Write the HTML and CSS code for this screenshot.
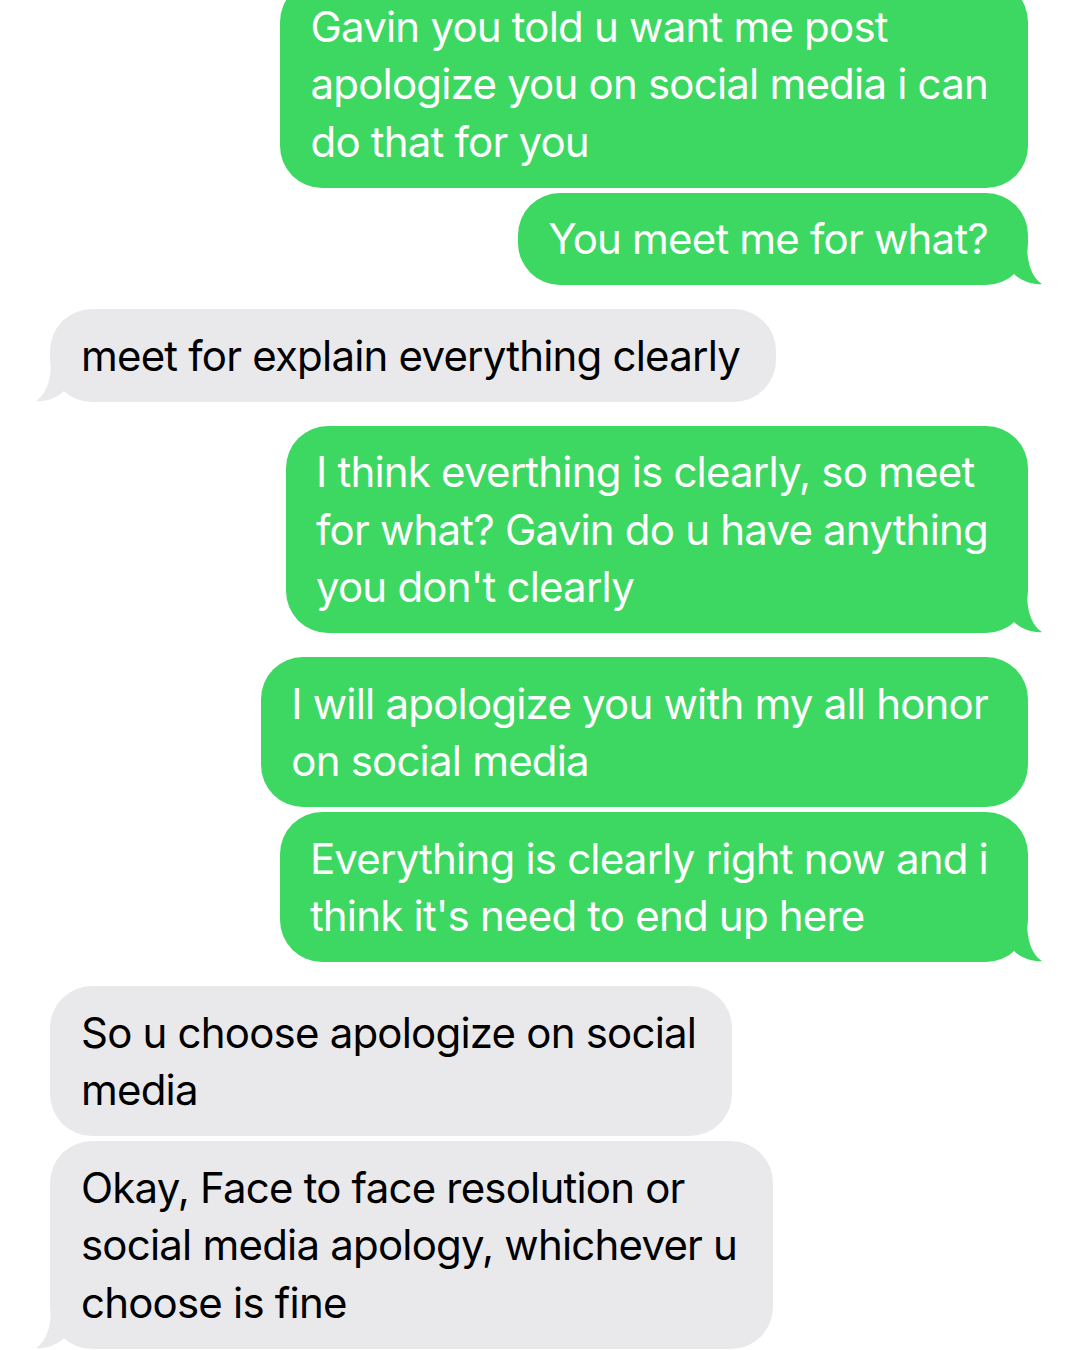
FILE: index.html
```
<!DOCTYPE html>
<html lang="en">
<head>
<meta charset="UTF-8" />
<meta name="viewport" content="width=device-width, initial-scale=1" />
<title>Messages</title>
<link rel="stylesheet" href="styles.css">
</head>
<body>

<div class="thread">
  <div class="msg sent">Gavin you told u want me post<br>apologize you on social media i can<br>do that for you</div>
  <div class="msg sent tail close">You meet me for what?
    <svg class="tail-svg" viewBox="0 0 36 41" width="36" height="41"><path d="M20 0 C20 22 26 34 35 40 C27 41 16 38 8 31 L0 20 L0 0 Z"/></svg>
  </div>

  <div class="msg recv tail">meet for explain everything clearly
    <svg class="tail-svg" viewBox="0 0 36 41" width="36" height="41"><path d="M20 0 C20 22 26 34 35 40 C27 41 16 38 8 31 L0 20 L0 0 Z"/></svg>
  </div>

  <div class="msg sent tail">I think everthing is clearly, so meet<br>for what? Gavin do u have anything<br>you don't clearly
    <svg class="tail-svg" viewBox="0 0 36 41" width="36" height="41"><path d="M20 0 C20 22 26 34 35 40 C27 41 16 38 8 31 L0 20 L0 0 Z"/></svg>
  </div>

  <div class="msg sent">I will apologize you with my all honor<br>on social media</div>
  <div class="msg sent tail close">Everything is clearly right now and i<br>think it's need to end up here
    <svg class="tail-svg" viewBox="0 0 36 41" width="36" height="41"><path d="M20 0 C20 22 26 34 35 40 C27 41 16 38 8 31 L0 20 L0 0 Z"/></svg>
  </div>

  <div class="msg recv">So u choose apologize on social<br>media</div>
  <div class="msg recv tail close">Okay, Face to face resolution or<br>social media apology, whichever u<br>choose is fine
    <svg class="tail-svg" viewBox="0 0 36 41" width="36" height="41"><path d="M20 0 C20 22 26 34 35 40 C27 41 16 38 8 31 L0 20 L0 0 Z"/></svg>
  </div>
</div>

</body>
</html>
```

FILE: styles.css
```
body {
  margin: 0;
  background-color: #fff;
  font-family: 'Inter', 'Liberation Sans', sans-serif;
  overflow: hidden;
}
.thread {
  display: flex;
  flex-direction: column;
  margin-top: -20px;
}
.msg {
  position: relative;
  font-size: 42px;
  line-height: 57.5px;
  letter-spacing: -0.8px;
  padding: 17.5px 31px;
  border-radius: 42px;
  margin-top: 24px;
  white-space: nowrap;
}
.msg:first-child {
  margin-top: 0;
}
.msg.close {
  margin-top: 5px;
}
.sent {
  align-self: flex-end;
  margin-right: 52px;
  padding-left: 30px;
  padding-right: 40px;
  background-color: #3dd862;
  color: #fff;
}
.recv {
  align-self: flex-start;
  margin-left: 50px;
  padding-right: 36px;
  background-color: #e9e9eb;
  color: #000;
}
.tail-svg {
  position: absolute;
  bottom: 0;
  display: block;
}
.sent .tail-svg {
  right: -15px;
  fill: #3dd862;
}
.recv .tail-svg {
  left: -15px;
  fill: #e9e9eb;
  transform: scaleX(-1);
}
```
